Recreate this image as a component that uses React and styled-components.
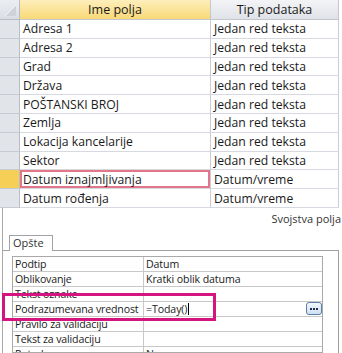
import React from 'react';
import styled, { createGlobalStyle } from 'styled-components';

const Global = createGlobalStyle`
  html, body { margin: 0; padding: 0; background: #fff; }
  body { font-family: "Open Sans", "Noto Sans", sans-serif; color: #1a1a1a; }
  * { box-sizing: border-box; }
`;

const Page = styled.div`
  width: 342px;
  height: 353px;
  overflow: hidden;
  background: #fff;
`;

const Grid = styled.div`
  display: flex;
  flex-direction: column;
  width: 339px;
`;

const HeaderRow = styled.div`
  display: flex;
  height: 20px;
`;

const Corner = styled.div`
  width: 20px;
  height: 20px;
  background: linear-gradient(#eceef1, #dadee4);
  border-right: 1px solid #b9bec6;
  border-bottom: 1px solid #b9bec6;
  display: flex;
  align-items: flex-end;
  justify-content: flex-end;
`;

const HeaderCell = styled.div`
  width: ${p => p.$w}px;
  height: 20px;
  display: flex;
  align-items: center;
  justify-content: center;
  font-size: 12.5px;
  padding-bottom: 1px;
  background: ${p => (p.$active ? 'linear-gradient(#fdeebb, #f9d977)' : 'linear-gradient(#f3f4f6, #dfe2e7)')};
  border-right: 1px solid #c3c8cf;
  border-bottom: 1px solid #c3c8cf;
`;

const Row = styled.div`
  display: flex;
  height: 18.8px;
`;

const Selector = styled.div`
  width: 20px;
  background: ${p => (p.$current ? '#f6cf57' : '#e1e5ea')};
  border-right: 1px solid #b9bec6;
  border-bottom: 1px solid #c6cbd2;
`;

const Cell = styled.div`
  width: ${p => p.$w}px;
  display: flex;
  align-items: center;
  padding-left: 3px;
  font-size: 12.2px;
  white-space: nowrap;
  border-right: 1px solid #c9ced5;
  border-bottom: 1px solid #d6dae0;
  box-shadow: ${p => (p.$current ? 'inset 0 0 0 2px #e2768a' : 'none')};
`;

const Properties = styled.div`
  position: relative;
  margin-left: 2px;
  border-left: 1px solid #a9a9a9;
  height: 150px;
`;

const Caption = styled.div`
  text-align: right;
  font-size: 11px;
  line-height: 14px;
  padding-top: 4px;
  padding-right: 1px;
  color: #333;
`;

const TabStrip = styled.div`
  display: flex;
  padding-left: 6px;
  margin-top: 9px;
`;

const Tab = styled.div`
  position: relative;
  z-index: 1;
  width: 44px;
  height: 16px;
  margin-bottom: -1px;
  border: 1px solid #9fa3a8;
  border-bottom: none;
  background: #fff;
  font-size: 11px;
  line-height: 14px;
  padding-left: 3px;
  color: #333;
`;

const TabPanel = styled.div`
  border-top: 1px solid #a0a0a0;
  border-right: 1px solid #a0a0a0;
  width: 336px;
  height: 110px;
  padding: 5px 0 0 9px;
`;

const PropGrid = styled.div`
  width: 311px;
  height: 97px;
  overflow: hidden;
  border: 1px solid #a9a9a9;
  display: flex;
  flex-direction: column;
`;

const PropRow = styled.div`
  display: flex;
  flex-shrink: 0;
  height: 15px;
  border-bottom: 1px solid #c8c8c8;
`;

const PropLabel = styled.div`
  width: 131px;
  flex-shrink: 0;
  border-right: 1px solid #c8c8c8;
  padding-left: 2px;
  font-size: 10.6px;
  letter-spacing: -0.15px;
  line-height: 14px;
  white-space: nowrap;
  overflow: hidden;
`;

const PropValue = styled.div`
  flex: 1;
  display: flex;
  align-items: center;
  padding-left: 2px;
  font-size: 10.6px;
  letter-spacing: -0.1px;
  line-height: 14px;
  white-space: nowrap;
`;

const Caret = styled.span`
  display: inline-block;
  width: 1px;
  height: 12px;
  background: #000;
  margin-left: 1px;
`;

const EllipsisButton = styled.div`
  margin-left: auto;
  width: 16px;
  height: 13px;
  border: 1px solid #5e7ea8;
  border-radius: 3px;
  background: linear-gradient(#f2f7fd, #cfe0f2);
  display: flex;
  align-items: center;
  justify-content: center;
  gap: 1px;
`;

const Dot = styled.span`
  width: 2px;
  height: 2px;
  background: #1e2f4f;
`;

const Highlight = styled.div`
  position: absolute;
  left: -1px;
  top: 85px;
  width: 214px;
  height: 28px;
  border: 3px solid #d5157f;
  pointer-events: none;
`;

const fields = [
  ['Adresa 1', 'Jedan red teksta'],
  ['Adresa 2', 'Jedan red teksta'],
  ['Grad', 'Jedan red teksta'],
  ['Država', 'Jedan red teksta'],
  ['POŠTANSKI BROJ', 'Jedan red teksta'],
  ['Zemlja', 'Jedan red teksta'],
  ['Lokacija kancelarije', 'Jedan red teksta'],
  ['Sektor', 'Jedan red teksta'],
  ['Datum iznajmljivanja', 'Datum/vreme', true],
  ['Datum rođenja', 'Datum/vreme'],
];

const props = [
  ['Podtip', 'Datum'],
  ['Oblikovanje', 'Kratki oblik datuma'],
  ['Tekst oznake', ''],
  ['Podrazumevana vrednost', '=Today()', 'edit'],
  ['Pravilo za validaciju', ''],
  ['Tekst za validaciju', ''],
  ['Potrebno', 'Ne'],
];

export default function App() {
  return (
    <Page>
      <Global />
      <Grid>
        <HeaderRow>
          <Corner>
            <svg width="19" height="19" viewBox="0 0 19 19">
              <polygon points="5,16 16,16 16,5" fill="#cfd3d9" />
              <line x1="5" y1="16" x2="16" y2="5" stroke="#f4f5f7" strokeWidth="1" />
            </svg>
          </Corner>
          <HeaderCell $w={191} $active>Ime polja</HeaderCell>
          <HeaderCell $w={128}>Tip podataka</HeaderCell>
        </HeaderRow>
        {fields.map(([name, type, current]) => (
          <Row key={name}>
            <Selector $current={current} />
            <Cell $w={191} $current={current}>{name}</Cell>
            <Cell $w={128}>{type}</Cell>
          </Row>
        ))}
      </Grid>
      <Properties>
        <Caption>Svojstva polja</Caption>
        <TabStrip>
          <Tab>Opšte</Tab>
        </TabStrip>
        <TabPanel>
          <PropGrid>
            {props.map(([label, value, kind]) => (
              <PropRow key={label}>
                <PropLabel>{label}</PropLabel>
                <PropValue>
                  {value}
                  {kind === 'edit' && (
                    <>
                      <Caret />
                      <EllipsisButton>
                        <Dot />
                        <Dot />
                        <Dot />
                      </EllipsisButton>
                    </>
                  )}
                </PropValue>
              </PropRow>
            ))}
          </PropGrid>
        </TabPanel>
        <Highlight />
      </Properties>
    </Page>
  );
}
